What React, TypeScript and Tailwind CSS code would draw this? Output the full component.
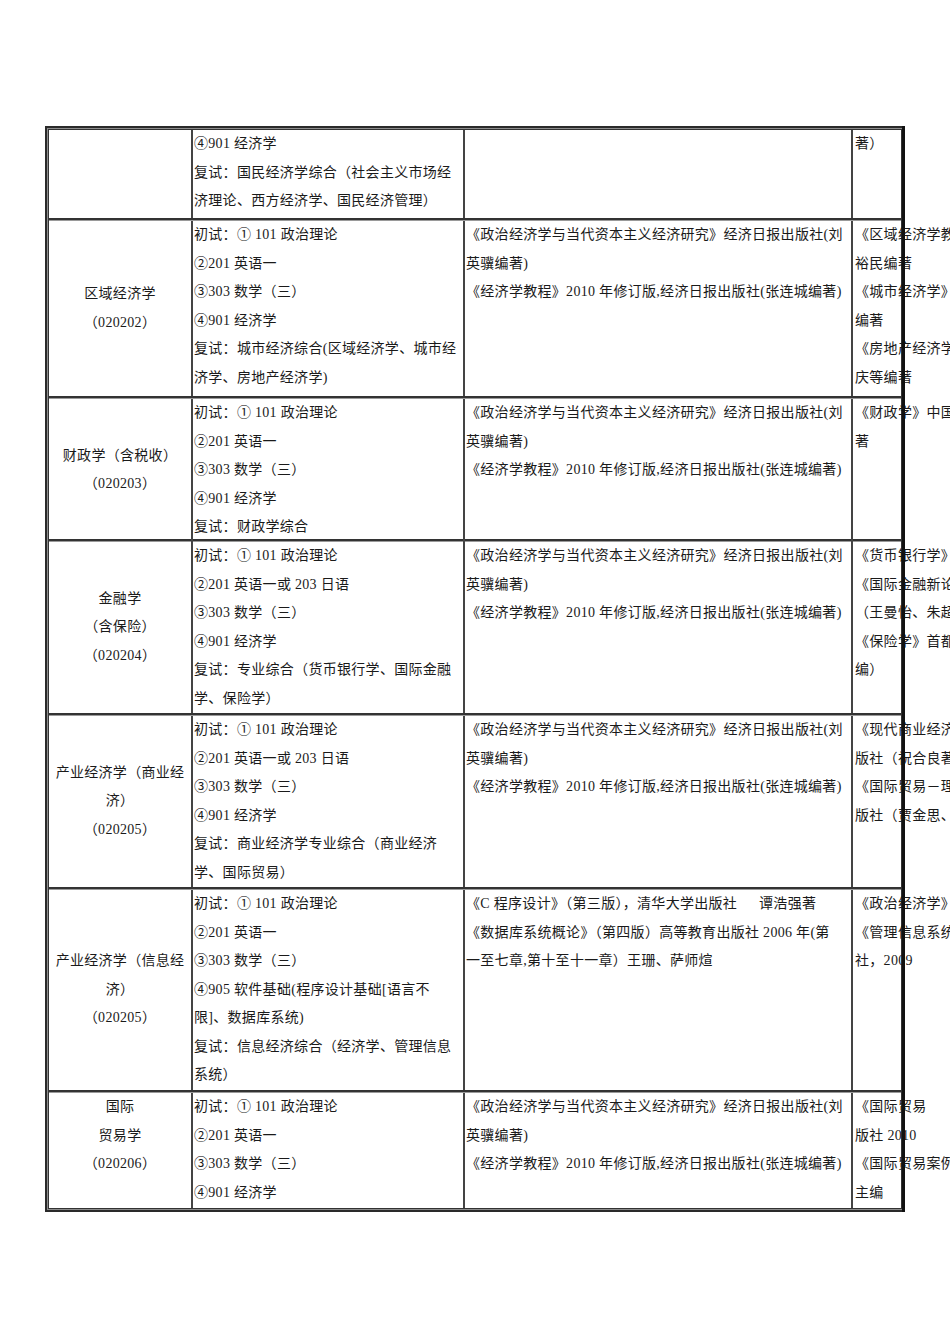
import React from "react";

const A = [
  "《政治经济学与当代资本主义经济研究》经济日报出版社(刘",
  "英骥编著)",
  "《经济学教程》2010 年修订版,经济日报出版社(张连城编著)",
];

type RowProps = {
  h: string;
  c1: string[];
  c2: string[];
  c3: string[];
  c4: string[];
  first?: boolean;
  last?: boolean;
  c1top?: boolean;
};

function Lines({ lines }: { lines: string[] }) {
  return (
    <>
      {lines.map((l, i) => (
        <div key={i} className="whitespace-pre leading-[28.5px]">
          {l}
        </div>
      ))}
    </>
  );
}

function Row({ h, c1, c2, c3, c4, first, last, c1top }: RowProps) {
  return (
    <div
      className={[
        "grid grid-cols-[144px_272px_388px_49px]",
        h,
        first ? "" : "border-t border-[#9a9a9a]",
        last ? "" : "border-b-2 border-b-[#333]",
      ].join(" ")}
    >
      <div
        className={
          c1top
            ? "flex flex-col items-center border-r-2 border-[#444]"
            : "flex flex-col items-center justify-center border-r-2 border-[#444]"
        }
      >
        <Lines lines={c1} />
      </div>
      <div className="border-r-2 border-[#444] pl-px">
        <Lines lines={c2} />
      </div>
      <div className="border-r-2 border-[#444] pl-px">
        <Lines lines={c3} />
      </div>
      <div className="pl-[2px]">
        <Lines lines={c4} />
      </div>
    </div>
  );
}

export default function App() {
  return (
    <div
      className="w-[950px] h-[1344px] overflow-hidden bg-white text-[14px] tracking-[0.3px] text-[#1a1a1a]"
      style={{ fontFamily: '"Liberation Serif", "Noto Sans CJK SC", serif' }}
    >
      <div className="relative ml-[45px] mt-[126px] w-[860px] border-2 border-[#2a2a2a] bg-[#8c8c8c] p-px">
        <div className="border border-[#333] bg-white">
          <Row
            first
            h="h-[90px]"
            c1={[]}
            c2={[
              "④901 经济学",
              "复试：国民经济学综合（社会主义市场经",
              "济理论、西方经济学、国民经济管理）",
            ]}
            c3={[]}
            c4={["著）"]}
          />
          <Row
            h="h-[178px]"
            c1={["区域经济学", "（020202）"]}
            c2={[
              "初试：① 101 政治理论",
              "②201 英语一",
              "③303 数学（三）",
              "④901 经济学",
              "复试：城市经济综合(区域经济学、城市经",
              "济学、房地产经济学)",
            ]}
            c3={A}
            c4={[
              "《区域经济学教程》",
              "裕民编著",
              "《城市经济学》",
              "编著",
              "《房地产经济学》",
              "庆等编著",
            ]}
          />
          <Row
            h="h-[143px]"
            c1={["财政学（含税收）", "（020203）"]}
            c2={[
              "初试：① 101 政治理论",
              "②201 英语一",
              "③303 数学（三）",
              "④901 经济学",
              "复试：财政学综合",
            ]}
            c3={A}
            c4={["《财政学》中国人民", "著"]}
          />
          <Row
            h="h-[174px]"
            c1={["金融学", "（含保险）", "（020204）"]}
            c2={[
              "初试：① 101 政治理论",
              "②201 英语一或 203 日语",
              "③303 数学（三）",
              "④901 经济学",
              "复试：专业综合（货币银行学、国际金融",
              "学、保险学）",
            ]}
            c3={A}
            c4={[
              "《货币银行学》",
              "《国际金融新论》",
              "（王曼怡、朱超",
              "《保险学》首都",
              "编）",
            ]}
          />
          <Row
            h="h-[174px]"
            c1={["产业经济学（商业经", "济）", "（020205）"]}
            c2={[
              "初试：① 101 政治理论",
              "②201 英语一或 203 日语",
              "③303 数学（三）",
              "④901 经济学",
              "复试：商业经济学专业综合（商业经济",
              "学、国际贸易）",
            ]}
            c3={A}
            c4={[
              "《现代商业经济学》",
              "版社（祝合良著）",
              "《国际贸易－理论",
              "版社（贾金思、",
            ]}
          />
          <Row
            h="h-[203px]"
            c1={["产业经济学（信息经", "济）", "（020205）"]}
            c2={[
              "初试：① 101 政治理论",
              "②201 英语一",
              "③303 数学（三）",
              "④905 软件基础(程序设计基础[语言不",
              "限]、数据库系统)",
              "复试：信息经济综合（经济学、管理信息",
              "系统）",
            ]}
            c3={[
              "《C 程序设计》（第三版），清华大学出版社　  谭浩强著",
              "《数据库系统概论》（第四版）高等教育出版社 2006 年(第",
              "一至七章,第十至十一章）王珊、萨师煊",
            ]}
            c4={["《政治经济学》", "《管理信息系统》", "社，2009"]}
          />
          <Row
            last
            c1top
            h="h-[116px]"
            c1={["国际", "贸易学", "（020206）"]}
            c2={[
              "初试：① 101 政治理论",
              "②201 英语一",
              "③303 数学（三）",
              "④901 经济学",
            ]}
            c3={A}
            c4={["《国际贸易", "版社 2010", "《国际贸易案例》", "主编"]}
          />
        </div>
        <div className="absolute -right-[2px] -top-[2px] -bottom-[2px] w-[3px] bg-[#111]" />
      </div>
    </div>
  );
}
